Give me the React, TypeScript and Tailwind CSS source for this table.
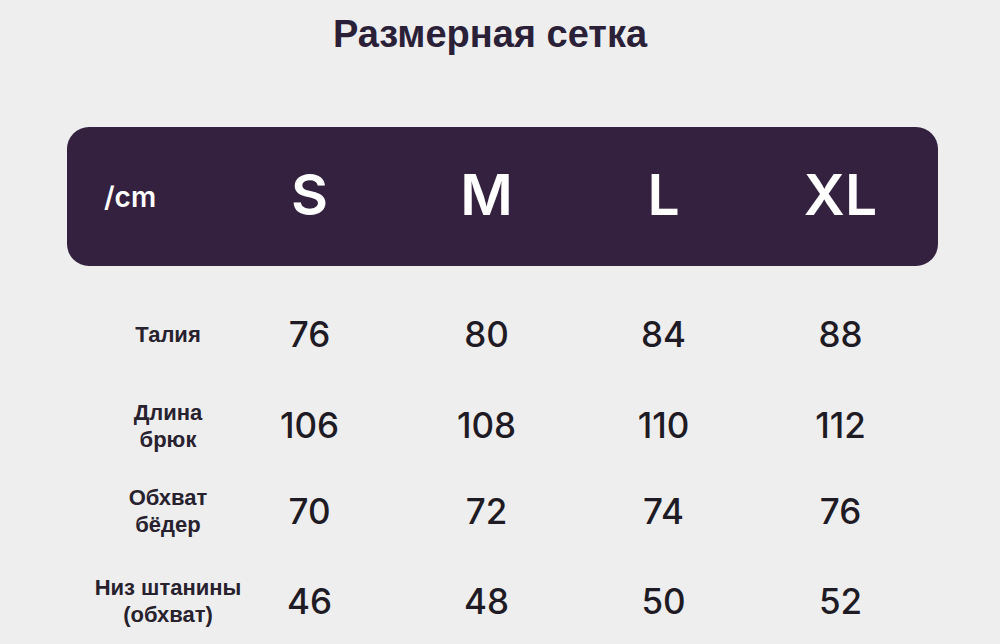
import React from "react";

const sizes = ["S", "M", "L", "XL"];

const rows: { label: string[]; values: string[]; h: string }[] = [
  { label: ["Талия"], values: ["76", "80", "84", "88"], h: "h-[91px]" },
  { label: ["Длина", "брюк"], values: ["106", "108", "110", "112"], h: "h-[91px]" },
  { label: ["Обхват", "бёдер"], values: ["70", "72", "74", "76"], h: "h-[80px]" },
  { label: ["Низ штанины", "(обхват)"], values: ["46", "48", "50", "52"], h: "h-[100px]" },
];

export default function App() {
  return (
    <div className="w-[1000px] h-[644px] overflow-hidden bg-[#efeeef] flex flex-col">
      <h1 className="pt-[12px] pr-[20px] text-center text-[38px] leading-[44px] font-bold text-[#2a2138] font-['Liberation_Sans',Arial,sans-serif]">
        Размерная сетка
      </h1>
      <div className="ml-[67px] mt-[71px] w-[871px]">
        <div className="h-[139px] rounded-[22px] bg-[#33213f] grid grid-cols-[154px_repeat(4,177px)] items-center pb-[4px] text-white font-['Inter',sans-serif]">
          <div className="pl-[37px] pt-[5px] text-[28px] font-semibold leading-none">/cm</div>
          {sizes.map((s) => (
            <div key={s} className="text-center text-[57px] font-semibold leading-none">
              {s}
            </div>
          ))}
        </div>
        <div className="pt-[23px] flex flex-col">
          {rows.map((r, i) => (
            <div key={i} className={`grid grid-cols-[154px_repeat(4,177px)] items-center ${r.h}`}>
              <div className="flex justify-center pl-[48px]">
                <div className="whitespace-nowrap text-center text-[22px] leading-[27px] font-bold text-[#28222f] font-['Liberation_Sans',Arial,sans-serif]">
                  {r.label.map((l, j) => (
                    <div key={j}>{l}</div>
                  ))}
                </div>
              </div>
              {r.values.map((v, j) => (
                <div key={j} className="text-center text-[35px] leading-none font-medium text-[#1f1b24] font-['Inter',sans-serif]">
                  {v}
                </div>
              ))}
            </div>
          ))}
        </div>
      </div>
    </div>
  );
}
